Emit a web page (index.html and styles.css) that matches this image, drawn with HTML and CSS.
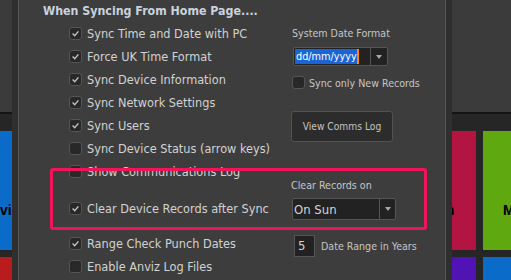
FILE: index.html
```
<!doctype html>
<html lang="en">

<head>
  <meta charset="UTF-8">
  <meta name="viewport" content="width=device-width, initial-scale=1.0">
  <title>Sync Options</title>
  <link rel="stylesheet" href="styles.css">
</head>

<body>
  <section class="desktop">
    <div class="topbar"></div>
    <div class="tiles first">
      <div class="tile blue">Anviz</div>
      <div class="tile grey">Devices</div>
      <div class="tile red">Run Calculation</div>
      <div class="tile green">Manage Employees</div>
    </div>
    <div class="tiles second">
      <div class="tile crimson"></div>
      <div class="tile grey"></div>
      <div class="tile purple"></div>
      <div class="tile blue"></div>
    </div>
  </section>

  <section class="dialog">
    <h2 class="heading">When Syncing From Home Page....</h2>
    <div class="cols">
      <div class="left">
        <label class="row"><span class="box on"></span>Sync Time and Date with PC</label>
        <label class="row"><span class="box on"></span>Force UK Time Format</label>
        <label class="row"><span class="box on"></span>Sync Device Information</label>
        <label class="row"><span class="box on"></span>Sync Network Settings</label>
        <label class="row"><span class="box on"></span>Sync Users</label>
        <label class="row"><span class="box"></span>Sync Device Status (arrow keys)</label>
        <label class="row"><span class="box"></span>Show Communications Log</label>
        <label class="row spaced"><span class="box on"></span>Clear Device Records after Sync</label>
        <label class="row"><span class="box on"></span>Range Check Punch Dates</label>
        <label class="row"><span class="box"></span>Enable Anviz Log Files</label>
      </div>
      <div class="right">
        <div class="label">System Date Format</div>
        <div class="combo date">
          <div class="value"><span class="selected">dd/mm/yyyy</span></div>
          <div class="arrow"><span></span></div>
        </div>
        <label class="row small"><span class="box"></span>Sync only New Records</label>
        <button class="btn">View Comms Log</button>
        <div class="label clear">Clear Records on</div>
        <div class="combo sun">
          <div class="value">On Sun</div>
          <div class="arrow"><span></span></div>
        </div>
        <div class="years">
          <div class="num">5</div>
          <span>Date Range in Years</span>
        </div>
      </div>
    </div>
    <div class="highlight"></div>
  </section>

  <script>
    // draw the tick inside every checked box
    let tick = '<svg viewBox="0 0 9 9"><path d="M1.6 4.6 L3.7 6.7 L7.4 2.4" fill="none" stroke="#c4c4c4" stroke-width="1.4"/></svg>';
    document.querySelectorAll('.box.on').forEach(function (b) {
      b.innerHTML = tick;
    });
  </script>
</body>
</html>
```

FILE: styles.css
```
* {
  box-sizing: border-box;
}

body {
  margin: 0;
  width: 511px;
  height: 280px;
  overflow: hidden;
  background: #262626;
  font-family: "DejaVu Sans Condensed", "DejaVu Sans", sans-serif;
}

.topbar {
  height: 114px;
  background: #3b3b3b;
  border-bottom: 2px solid #141414;
}

.tiles {
  display: flex;
  gap: 7px;
  margin-left: -88px;
}

.tiles.first {
  margin-top: 17px;
  height: 119px;
}

.tiles.second {
  margin-top: 7px;
  height: 100px;
}

.tile {
  flex: none;
  width: 170px;
  display: flex;
  align-items: center;
  justify-content: center;
  padding-top: 39px;
  font: bold 14px "Liberation Sans", sans-serif;
  color: #000;
  white-space: nowrap;
}

.tile.grey {
  width: 210px;
  background: #555;
}

.first .blue {
  padding-left: 6px;
}

.first .red {
  padding-left: 20px;
}

.blue { background: #0a6cc8; }
.red { background: #b41441; }
.green { background: #5fa80f; }
.crimson { background: #b81c1c; }
.purple { background: #5014b4; }

.dialog {
  position: absolute;
  left: 12px;
  top: 0;
  width: 440px;
  height: 280px;
  background: #3d3d3d;
  border-left: 6px solid #2f2f2f;
  border-right: 6px solid #2f2f2f;
  box-shadow: inset 1px 0 0 #585858, inset -1px 0 0 #585858;
}

.heading {
  margin: 0;
  height: 22px;
  padding: 1px 0 0 25px;
  line-height: 21px;
  font-size: 12.3px;
  font-weight: bold;
  color: #c9d2de;
  white-space: nowrap;
}

.cols {
  display: flex;
}

.left {
  width: 274px;
  padding-left: 51px;
}

.row {
  display: flex;
  align-items: center;
  gap: 5px;
  height: 23px;
  font-size: 12.6px;
  color: #d2d2d2;
  white-space: nowrap;
}

.row.spaced {
  margin: 14px 0 12px;
}

.box {
  flex: none;
  width: 13px;
  height: 13px;
  display: flex;
  align-items: center;
  justify-content: center;
  border: 1px solid #555;
  border-radius: 3px;
  background: #282828;
}

.box svg {
  width: 9px;
  height: 9px;
}

.right {
  display: flex;
  flex-direction: column;
  align-items: flex-start;
  font-size: 10.6px;
  color: #c6c6c6;
}

.label {
  height: 23px;
  line-height: 23px;
  white-space: nowrap;
}

.combo {
  display: flex;
  border: 1px solid #555;
  border-radius: 2px;
  background: #222;
}

.combo .value {
  flex: 1;
  display: flex;
  align-items: center;
  padding-left: 1px;
  white-space: nowrap;
}

.combo .arrow {
  width: 17px;
  display: flex;
  align-items: center;
  justify-content: center;
  border-left: 1px solid #555;
}

.combo .arrow span {
  border-left: 3.5px solid transparent;
  border-right: 3.5px solid transparent;
  border-top: 4px solid #a8a8a8;
}

.combo.date {
  margin: 2px 0 0 1px;
  width: 95px;
  height: 19px;
  font-size: 10.8px;
}

.selected {
  height: 15px;
  line-height: 15px;
  padding-left: 1px;
  background: #1a64d6;
  color: #fff;
  border-right: 2px solid #ff8a00;
}

.row.small {
  margin-top: 5px;
  gap: 4px;
  font-size: 10.6px;
  color: #c6c6c6;
}

.btn {
  margin: 17px 0 0 -1px;
  width: 102px;
  height: 31px;
  padding: 0;
  background: #2c2c2c;
  border: 1px solid #515151;
  border-radius: 3px;
  font-family: inherit;
  font-size: 10.2px;
  color: #c4c4c4;
}

.label.clear {
  margin: 35px 0 0 -1px;
  height: 16px;
  line-height: 16px;
}

.combo.sun {
  margin-top: 5px;
  width: 104px;
  height: 22px;
  font-size: 13px;
  color: #d4d4d4;
}

.combo.sun .arrow {
  width: 16px;
}

.years {
  display: flex;
  align-items: center;
  gap: 6px;
  margin: 15px 0 0 2px;
  white-space: nowrap;
}

.num {
  width: 21px;
  height: 22px;
  line-height: 20px;
  padding-left: 3px;
  border: 1px solid #555;
  background: #222;
  font-size: 13px;
  color: #d4d4d4;
}

.highlight {
  position: absolute;
  left: 32px;
  top: 168px;
  width: 377px;
  height: 62px;
  border: 3px solid #f0145a;
  border-radius: 3px;
}
```
